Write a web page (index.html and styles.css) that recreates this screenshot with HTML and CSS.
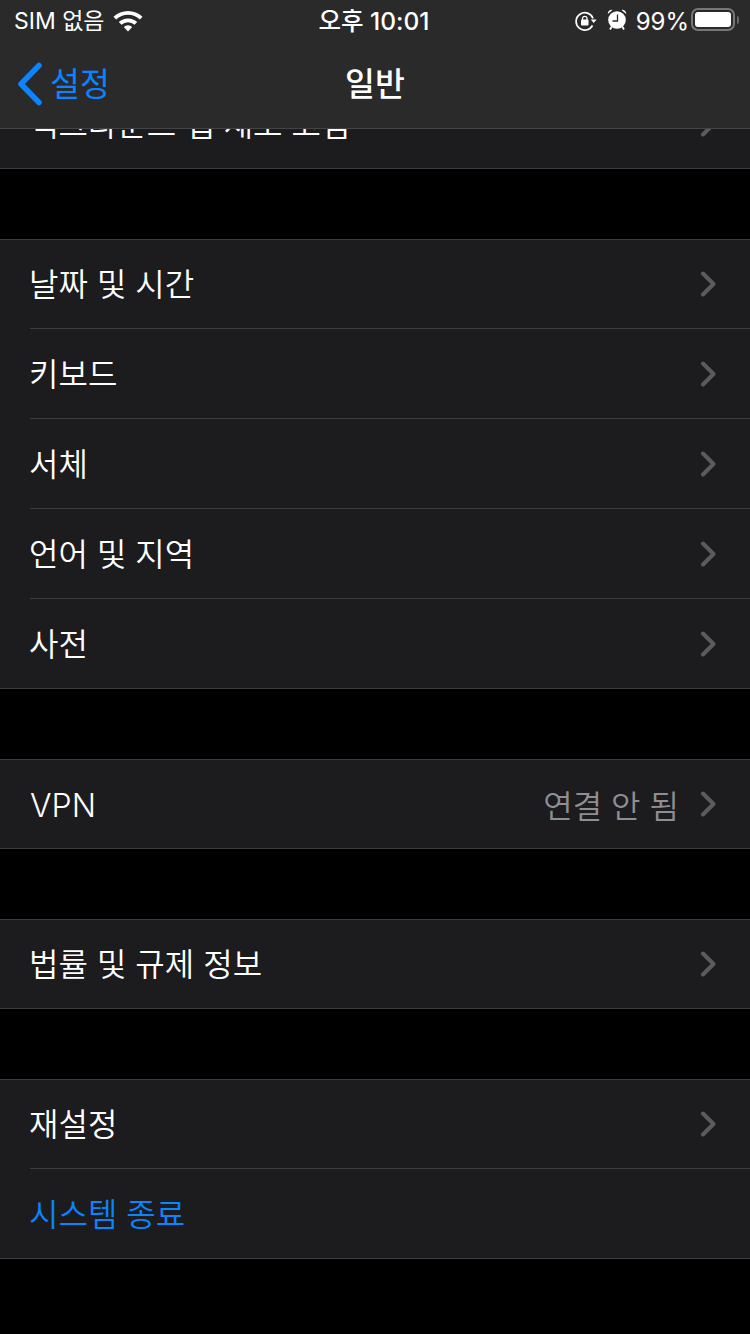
FILE: index.html
```html
<!DOCTYPE html>
<html lang="ko">
<head>
<meta charset="utf-8">
<title>일반</title>
<link rel="stylesheet" href="styles.css">
</head>
<body>
<header class="topbar">
  <div class="status">
    <div class="status-left">
      <span class="carrier">SIM 없음</span>
      <svg class="wifi" width="30" height="23" viewBox="0 0 30 23"><path d="M.5 7.800a21 21 0 0 1 29 0l-2.600 2.800a17 17 0 0 0-23.800 0z M5.800 13a13.500 13.500 0 0 1 18.400 0l-2.700 2.800a9.500 9.500 0 0 0-13 0z M10.800 18a6.200 6.200 0 0 1 8.400 0L15 22.500z" fill="#fff"/></svg>
    </div>
    <div class="clock">오후 10:01</div>
    <div class="status-right">
      <svg class="lock" width="22" height="20" viewBox="0 0 22 20"><path d="M17.500 14.500A8.700 8.700 0 1 1 18 7.500" fill="none" stroke="#fff" stroke-width="1.700"/><path d="M15.800 8.500h5.800L18.700 12z" fill="#fff"/><rect x="6" y="8.500" width="7.500" height="6" rx="1" fill="#fff"/><path d="M7.500 9V7.200a2.300 2.300 0 0 1 4.500 0V9" fill="none" stroke="#fff" stroke-width="1.300"/></svg>
      <svg class="alarm" width="20" height="21" viewBox="0 0 20 21"><circle cx="10" cy="11" r="8.800" fill="#fff"/><path d="M10.500 5.500v6.500H5.500" fill="none" stroke="#2a2a2b" stroke-width="1.300"/><path d="M.8 5A3.800 3.800 0 0 1 5.500 1z M19.200 5A3.800 3.800 0 0 0 14.500 1z" fill="#fff"/><path d="M4.500 18 3 20.500M15.500 18l1.500 2.500" stroke="#fff" stroke-width="1.800"/></svg>
      <span class="pct">99%</span>
      <div class="battery"><div class="level"></div></div><div class="nub"></div>
    </div>
  </div>
  <nav class="navbar">
    <div class="back">
      <svg class="back-icon" width="28" height="44" viewBox="0 0 28 44"><path d="M23 3.500 5 22l18 18.500" fill="none" stroke="#0a84ff" stroke-width="5.500" stroke-linecap="round" stroke-linejoin="round"/></svg>
      <span>설정</span>
    </div>
    <h1 class="title">일반</h1>
  </nav>
</header>

<main class="content">
  <section class="group">
    <div class="row"><span class="label">백그라운드 앱 새로 고침</span><svg class="chev" width="16" height="28" viewBox="0 0 16 28"><path d="M3 3.500 13.500 14 3 24.500" /></svg></div>
  </section>
  <section class="group">
    <div class="row"><span class="label">날짜 및 시간</span><svg class="chev" width="16" height="28" viewBox="0 0 16 28"><path d="M3 3.500 13.500 14 3 24.500" /></svg></div>
    <div class="row"><span class="label">키보드</span><svg class="chev" width="16" height="28" viewBox="0 0 16 28"><path d="M3 3.500 13.500 14 3 24.500" /></svg></div>
    <div class="row"><span class="label">서체</span><svg class="chev" width="16" height="28" viewBox="0 0 16 28"><path d="M3 3.500 13.500 14 3 24.500" /></svg></div>
    <div class="row"><span class="label">언어 및 지역</span><svg class="chev" width="16" height="28" viewBox="0 0 16 28"><path d="M3 3.500 13.500 14 3 24.500" /></svg></div>
    <div class="row"><span class="label">사전</span><svg class="chev" width="16" height="28" viewBox="0 0 16 28"><path d="M3 3.500 13.500 14 3 24.500" /></svg></div>
  </section>
  <section class="group">
    <div class="row"><span class="label latin">VPN</span><span class="value">연결 안 됨</span><svg class="chev" width="16" height="28" viewBox="0 0 16 28"><path d="M3 3.500 13.500 14 3 24.500" /></svg></div>
  </section>
  <section class="group">
    <div class="row"><span class="label">법률 및 규제 정보</span><svg class="chev" width="16" height="28" viewBox="0 0 16 28"><path d="M3 3.500 13.500 14 3 24.500" /></svg></div>
  </section>
  <section class="group">
    <div class="row"><span class="label">재설정</span><svg class="chev" width="16" height="28" viewBox="0 0 16 28"><path d="M3 3.500 13.500 14 3 24.500" /></svg></div>
    <div class="row"><span class="label action">시스템 종료</span></div>
  </section>
</main>
</body>
</html>
```
FILE: styles.css
```css
* { box-sizing: border-box; }
html, body { margin: 0; height: 1334px; overflow: hidden; background: #000; }
body {
  position: relative;
  width: 750px;
  color: #fff;
  font-family: "Inter", "Noto Sans CJK KR", sans-serif;
}
.topbar {
  position: absolute;
  top: 0; left: 0; right: 0;
  height: 129px;
  background: #2a2a2b;
  border-bottom: 1px solid #444446;
  z-index: 2;
}
.status {
  display: grid;
  grid-template-columns: 1fr auto 1fr;
  align-items: center;
  height: 40px;
  padding: 0 14px;
}
.status-left { display: flex; align-items: center; gap: 8px; font-size: 23px; }
.carrier { margin-top: -3px; }
.wifi { display: block; }
.clock { font-size: 24.500px; font-weight: 500; text-align: center; margin: -2px 2px 0 0; }
.status-right { display: flex; align-items: center; justify-content: flex-end; font-size: 24px; }
.lock { margin-right: 10px; margin-top: 1px; }
.alarm { margin-right: 9px; margin-top: -2px; }
.pct { margin-right: 2px; margin-top: 2px; }
.battery {
  width: 44px; height: 23px;
  border: 2px solid #777779;
  border-radius: 7px;
  padding: 2px;
  margin-top: -1px;
}
.level { width: 100%; height: 100%; background: #fff; border-radius: 3px; }
.nub { width: 2px; height: 8px; margin-left: 2px; margin-right: -3px; background: #666; border-radius: 0 2px 2px 0; }
.navbar {
  position: relative;
  display: flex;
  align-items: center;
  justify-content: center;
  height: 88px;
}
.back {
  position: absolute;
  left: 16px; top: 0; bottom: 0;
  display: flex;
  align-items: center;
  gap: 6px;
  color: #0a84ff;
  font-size: 32.500px;
  padding-bottom: 5px;
}
.back-icon { margin-top: 5px; }
.title { margin: 0; font-size: 32.500px; font-weight: 500; padding-bottom: 5px; }
.content { padding-top: 79px; display: flex; flex-direction: column; gap: 70px; }
.group {
  background: #1c1c1e;
  border-top: 1px solid #3d3d40;
  border-bottom: 1px solid #3d3d40;
}
.row {
  display: flex;
  align-items: center;
  height: 90px;
  margin-left: 30px;
  padding-right: 34px;
  border-bottom: 1px solid #3d3d40;
  font-size: 32px;
}
.group .row:first-child { margin-top: -1px; }
.group .row:last-child { margin-bottom: -1px; border-bottom: 0; height: 90px; }
.label { flex: 1; font-weight: 350; margin-left: -1px; margin-top: -4px; }
.label.latin { margin: 2px 0 0; }
.action { color: #0a84ff; }
.value { color: #8e8e93; margin-right: 21px; font-size: 32px; font-weight: 350; }
.chev { display: block; fill: none; stroke: #5b5b5f; stroke-width: 4; stroke-linecap: round; stroke-linejoin: round; }
```
